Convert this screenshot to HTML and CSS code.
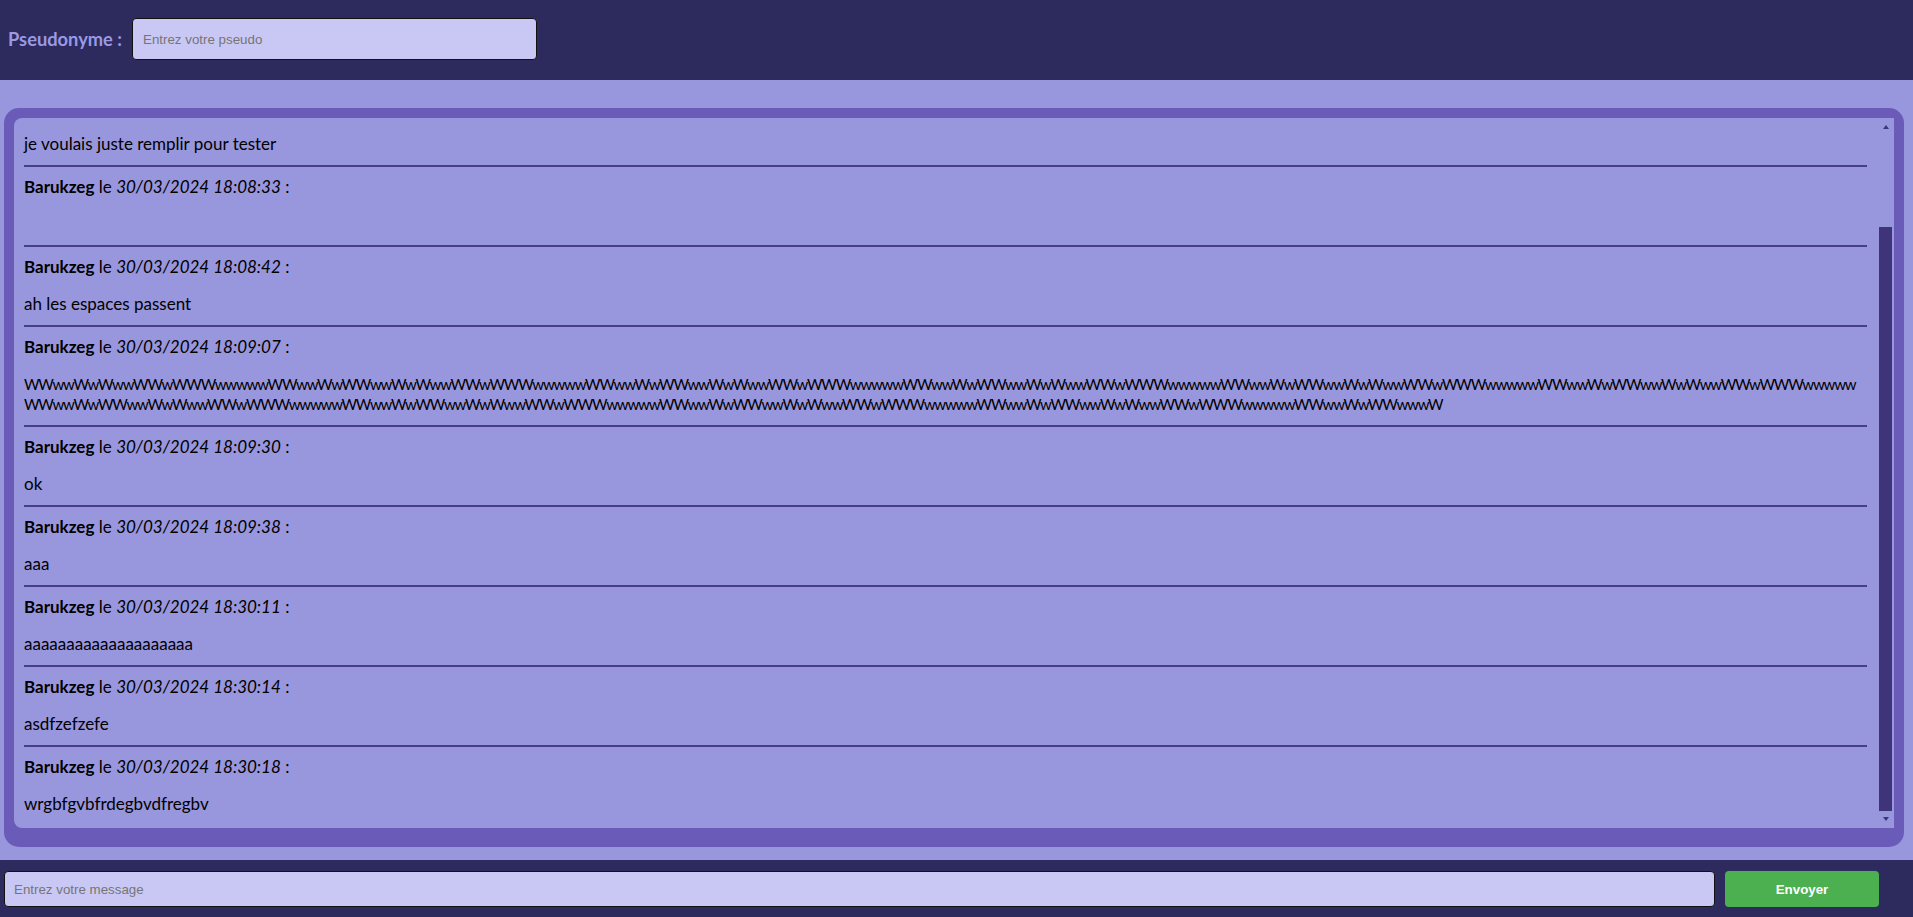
FILE: index.html
```html
<!DOCTYPE html>
<html lang="fr">
<head>
<meta charset="utf-8">
<title>Chat</title>
<link rel="stylesheet" href="styles.css">
</head>
<body>
<header class="topbar">
  <label class="pseudo-label" for="pseudo">Pseudonyme :</label>
  <input class="pseudo-input" id="pseudo" type="text" placeholder="Entrez votre pseudo">
</header>
<main class="main">
  <div class="chat-box">
    <div class="chat-scroll">
      <div class="chat-view">
        <div class="chat-list">
          <div class="msg">
            <p class="msg-head"><b>Barukzeg</b> le <i>30/03/2024 18:08:25</i> :</p>
            <p class="msg-text">je voulais juste remplir pour tester</p>
          </div>
          <div class="msg">
            <p class="msg-head"><b>Barukzeg</b> le <i>30/03/2024 18:08:33</i> :</p>
            <p class="msg-text">   </p>
          </div>
          <div class="msg">
            <p class="msg-head"><b>Barukzeg</b> le <i>30/03/2024 18:08:42</i> :</p>
            <p class="msg-text">ah les espaces passent</p>
          </div>
          <div class="msg">
            <p class="msg-head"><b>Barukzeg</b> le <i>30/03/2024 18:09:07</i> :</p>
            <p class="msg-text msg-long">WWwwWwWwwWWwWWWwwwwwWWwwWwWWwwWwWwwWWwWWWwwwwwWWwwWwWWwwWwWwwWWwWWWwwwwwWWwwWwWWwwWwWwwWWwWWWwwwwwWWwwWwWWwwWwWwwWWwWWWwwwwwWWwwWwWWwwWwWwwWWwWWWwwwwwWWwwWwWWwwWwWwwWWwWWWwwwwwWWwwWwWWwwWwWwwWWwWWWwwwwwWWwwWwWWwwWwWwwWWwWWWwwwwwWWwwWwWWwwWwWwwWWwWWWwwwwwWWwwWwWWwwwW</p>
          </div>
          <div class="msg">
            <p class="msg-head"><b>Barukzeg</b> le <i>30/03/2024 18:09:30</i> :</p>
            <p class="msg-text">ok</p>
          </div>
          <div class="msg">
            <p class="msg-head"><b>Barukzeg</b> le <i>30/03/2024 18:09:38</i> :</p>
            <p class="msg-text">aaa</p>
          </div>
          <div class="msg">
            <p class="msg-head"><b>Barukzeg</b> le <i>30/03/2024 18:30:11</i> :</p>
            <p class="msg-text">aaaaaaaaaaaaaaaaaaaa</p>
          </div>
          <div class="msg">
            <p class="msg-head"><b>Barukzeg</b> le <i>30/03/2024 18:30:14</i> :</p>
            <p class="msg-text">asdfzefzefe</p>
          </div>
          <div class="msg">
            <p class="msg-head"><b>Barukzeg</b> le <i>30/03/2024 18:30:18</i> :</p>
            <p class="msg-text">wrgbfgvbfrdegbvdfregbv</p>
          </div>
        </div>
      </div>
      <div class="scrollbar" aria-hidden="true">
        <div class="scroll-btn"><span class="arrow-up"></span></div>
        <div class="scroll-track"><div class="scroll-thumb"></div></div>
        <div class="scroll-btn"><span class="arrow-down"></span></div>
      </div>
    </div>
  </div>
</main>
<footer class="bottombar">
  <input class="message-input" type="text" placeholder="Entrez votre message">
  <button class="send-btn" type="button">Envoyer</button>
</footer>
</body>
</html>
```

FILE: styles.css
```css
html, body {
  margin: 0;
  height: 100%;
}

body {
  display: flex;
  flex-direction: column;
  background: #9896dc;
  font-family: Lato, "Open Sans", sans-serif;
  overflow: hidden;
}

.topbar {
  flex: none;
  height: 80px;
  box-sizing: border-box;
  background: #2d2a5e;
  display: flex;
  align-items: center;
  padding: 18px 0 20px 8px;
  gap: 10px;
}

.pseudo-label {
  color: #9a99e4;
  font-weight: 700;
  font-size: 18.3px;
}

.pseudo-input {
  width: 405px;
  height: 42px;
  box-sizing: border-box;
  border: 1px solid #111;
  border-radius: 4px;
  background: #c9c8f5;
  padding: 0 10px;
  font-family: "Liberation Sans", Arial, sans-serif;
  font-size: 13.33px;
  outline: none;
}

.main {
  flex: 1;
  min-height: 0;
  display: flex;
  padding: 28px 9px 13px 4px;
}

.chat-box {
  flex: 1;
  display: flex;
  min-height: 0;
  background: #6a5bb8;
  border-radius: 15px;
  padding: 10px 10px 19px 10px;
}

.chat-scroll {
  flex: 1;
  min-height: 0;
  display: flex;
  background: #9896dc;
  border-radius: 8px 0 0 8px;
  overflow: hidden;
}

.chat-view {
  flex: 1;
  min-width: 0;
  overflow: hidden;
  display: flex;
  flex-direction: column-reverse;
}

.chat-list {
  padding: 0 12px 3px 10px;
}

.msg {
  border-bottom: 2px solid #483d8b;
}

.msg:last-child {
  border-bottom: none;
}

.msg-head {
  margin: 10px 0 0;
  font-size: 17px;
  line-height: 20px;
  color: #000;
}

.msg-text {
  margin: 17px 0 11px;
  font-size: 17px;
  line-height: 20px;
  min-height: 20px;
  color: #000;
  white-space: pre-wrap;
  word-break: break-all;
}

.msg-long {
  font-size: 15px;
  letter-spacing: -1.18px;
}

.scrollbar {
  flex: none;
  width: 15px;
  display: flex;
  flex-direction: column;
}

.scroll-btn {
  flex: none;
  height: 15px;
  display: flex;
  justify-content: center;
  align-items: center;
  padding-right: 1px;
}

.arrow-up,
.arrow-down {
  width: 0;
  height: 0;
  border-left: 3.5px solid transparent;
  border-right: 3.5px solid transparent;
}

.arrow-up {
  border-bottom: 4px solid #3f3479;
  margin-top: 3px;
}

.arrow-down {
  border-top: 4px solid #3f3479;
  margin-bottom: 3px;
}

.scroll-track {
  flex: 1;
  display: flex;
  flex-direction: column;
  justify-content: flex-end;
}

.scroll-thumb {
  height: 584px;
  width: 13px;
  margin: 0 2px 2px 0;
  background: #3f3479;
}

.bottombar {
  flex: none;
  height: 57px;
  box-sizing: border-box;
  background: #2d2a5e;
  display: flex;
  align-items: flex-start;
  gap: 10px;
  padding: 11px 34px 0 4px;
}

.message-input {
  flex: 1;
  height: 36px;
  box-sizing: border-box;
  border: 1px solid #111;
  border-radius: 4px;
  background: #c9c8f5;
  padding: 0 9px;
  font-family: "Liberation Sans", Arial, sans-serif;
  font-size: 13.33px;
  outline: none;
}

.send-btn {
  width: 154px;
  height: 36px;
  border: none;
  border-radius: 4px;
  background: #4caf50;
  color: #fff;
  font-family: "Liberation Sans", Arial, sans-serif;
  font-weight: 700;
  font-size: 13.33px;
}
```
